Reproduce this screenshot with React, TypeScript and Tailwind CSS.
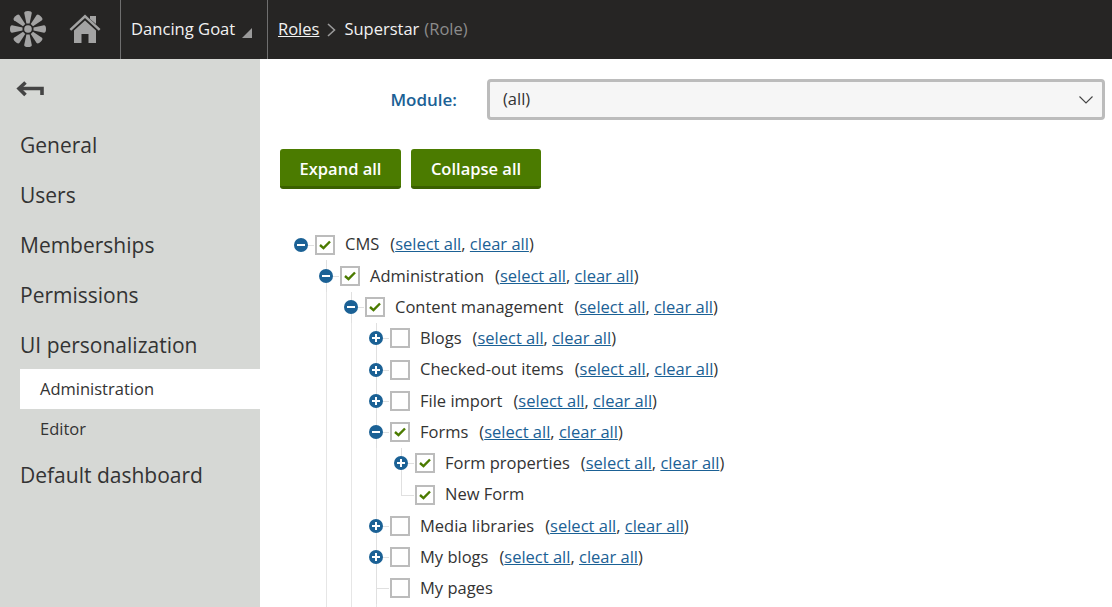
const MENU_TOP = ['General', 'Users', 'Memberships', 'Permissions', 'UI personalization'];

interface TreeRow {
  label: string;
  depth: number;
  checked?: boolean;
  toggle?: 'plus' | 'minus';
  last?: boolean;
  links?: boolean;
}

const ROWS: TreeRow[] = [
  { label: 'CMS', depth: 0, checked: true, toggle: 'minus', links: true },
  { label: 'Administration', depth: 1, checked: true, toggle: 'minus', links: true },
  { label: 'Content management', depth: 2, checked: true, toggle: 'minus', links: true },
  { label: 'Blogs', depth: 3, toggle: 'plus', links: true },
  { label: 'Checked-out items', depth: 3, toggle: 'plus', links: true },
  { label: 'File import', depth: 3, toggle: 'plus', links: true },
  { label: 'Forms', depth: 3, checked: true, toggle: 'minus', links: true },
  { label: 'Form properties', depth: 4, checked: true, toggle: 'plus', links: true },
  { label: 'New Form', depth: 4, checked: true, last: true },
  { label: 'Media libraries', depth: 3, toggle: 'plus', links: true },
  { label: 'My blogs', depth: 3, toggle: 'plus', links: true },
  { label: 'My pages', depth: 3 },
];

function Logo() {
  return (
    <svg width="38" height="38" viewBox="0 0 38 38" fill="#a3a3a3">
      <circle cx="19" cy="19" r="3.8" />
      {[0, 45, 90, 135, 180, 225, 270, 315].map(a => (
        <path
          key={a}
          transform={`rotate(${a} 19 19)`}
          d="M17.4 13.5 L15.2 3 Q15.2 1 19 1 Q22.8 1 22.8 3 L20.6 13.5 Z"
        />
      ))}
    </svg>
  );
}

function HomeIcon() {
  return (
    <svg width="32" height="30" viewBox="0 0 32 30" fill="#a3a3a3">
      <path d="M21 2h6v8l-6-5z" />
      <path d="M16 0.5 L31.5 15 L29.8 16.8 L16 4 L2.2 16.8 L0.5 15 Z" />
      <path d="M16 6.5 L27 16.5 V29 H19.5 V20 H12.5 V29 H5 V16.5 Z" />
    </svg>
  );
}

function BackArrow() {
  return (
    <svg width="28" height="16" viewBox="0 0 28 16" fill="none" stroke="#444" strokeWidth="3.6">
      <path d="M9.5 1.5 L3 7.5 L9.5 14" />
      <path d="M3 7.5 H26 V14" />
    </svg>
  );
}

function Toggle({ kind }: { kind: 'plus' | 'minus' }) {
  return (
    <span className="relative flex h-[14px] w-[14px] items-center justify-center rounded-full bg-[#1b6195]">
      <span className="h-[2px] w-[8px] bg-white" />
      {kind === 'plus' && <span className="absolute h-[8px] w-[2px] bg-white" />}
    </span>
  );
}

function CheckBox({ checked }: { checked?: boolean }) {
  return (
    <span className="ml-px flex h-[20px] w-[20px] shrink-0 items-center justify-center border-[2.5px] border-[#bcbcbc] bg-white">
      {checked && (
        <svg width="12" height="10" viewBox="0 0 12 10" fill="none" stroke="#4b7b00" strokeWidth="2.4">
          <path d="M1 5 L4.5 8.2 L11 1.5" />
        </svg>
      )}
    </span>
  );
}

function Guide({ show }: { show: boolean }) {
  return (
    <div className="w-[25px] shrink-0 pl-[12px]">
      {show && <div className="h-full w-px bg-[#e6e6e6]" />}
    </div>
  );
}

function Row({ row }: { row: TreeRow }) {
  return (
    <div className="flex h-[31.25px] items-stretch">
      {Array.from({ length: row.depth }).map((_, k) => (
        <Guide key={k} show={k > 0} />
      ))}
      <div className="relative flex w-[25px] shrink-0 items-center pl-[5px]">
        {row.depth > 0 && (
          <span className={`absolute left-[12px] top-0 w-px bg-[#e0e0e0] ${row.last ? 'h-1/2' : 'h-full'}`} />
        )}
        <span className="absolute left-[12px] right-0 top-1/2 h-px bg-[#e0e0e0]" />
        {row.toggle && <Toggle kind={row.toggle} />}
      </div>
      <div className="flex items-center">
        <CheckBox checked={row.checked} />
        <span className="ml-[10px] whitespace-nowrap">{row.label}</span>
        {row.links && (
          <span className="ml-[11px] whitespace-nowrap">
            (<a className="text-[#1b6195] underline">select all</a>, <a className="text-[#1b6195] underline">clear all</a>)
          </span>
        )}
      </div>
    </div>
  );
}

export default function App() {
  return (
    <div className="flex h-[607px] w-[1112px] flex-col overflow-hidden bg-white font-['Open_Sans',sans-serif] text-[#333]">
      <header className="flex h-[59px] shrink-0 items-stretch bg-[#262524] text-[16.5px] text-[#f2f2f2]">
        <div className="flex w-[120px] items-center gap-[22px] pl-[9px] pb-px">
          <Logo />
          <HomeIcon />
        </div>
        <div className="flex w-[148px] items-center border-x border-[#6f6f6f] pl-[10px]">
          <span className="text-[16.6px]">Dancing Goat</span>
          <svg className="ml-[7px] mt-[6px]" width="10" height="10" viewBox="0 0 10 10" fill="#9a9a9a">
            <path d="M10 0 V10 H0 Z" />
          </svg>
        </div>
        <div className="flex items-center pl-[10px]">
          <a className="underline">Roles</a>
          <svg className="ml-[8px] mr-[8px]" width="9" height="14" viewBox="0 0 9 14" fill="none" stroke="#9a9a9a" strokeWidth="1.6">
            <path d="M1 1 L7.5 7 L1 13" />
          </svg>
          <span>Superstar</span>
          <span className="ml-[5px] text-[#8c8c8c]">(Role)</span>
        </div>
      </header>
      <div className="flex min-h-0 flex-1">
        <aside className="w-[260px] shrink-0 bg-[#d6d8d5] pl-[20px]">
          <div className="-ml-[4px] pt-[22px]">
            <BackArrow />
          </div>
          <nav className="mt-[24px] text-[21px]">
            {MENU_TOP.map(item => (
              <div key={item} className="flex h-[50px] items-center">{item}</div>
            ))}
            <div className="-mt-[2px] text-[16.5px]">
              <div className="flex h-[40px] items-center bg-white pl-[20px]">Administration</div>
              <div className="flex h-[40px] items-center pl-[20px]">Editor</div>
            </div>
            <div className="mt-[2px] flex h-[50px] items-center">Default dashboard</div>
          </nav>
        </aside>
        <main className="min-w-0 flex-1 pl-[20px] pr-[8px] pt-[20px] text-[16.5px]">
          <div className="flex items-center">
            <label className="w-[177px] text-right text-[17px] font-semibold text-[#1b6195]">Module:</label>
            <div className="ml-[30px] -mr-px flex h-[41px] flex-1 items-center justify-between rounded-[4px] border-[3px] border-[#bcbcbc] bg-[#f6f6f6] pl-[13px] pr-[9px]">
              <span>(all)</span>
              <svg width="14" height="8" viewBox="0 0 14 8" fill="none" stroke="#444" strokeWidth="1.1">
                <path d="M0.5 0.5 L7 7 L13.5 0.5" />
              </svg>
            </div>
          </div>
          <div className="mt-[29px] flex gap-[10px]">
            <button className="h-[40px] w-[121px] rounded-[3px] border-b-[3px] border-[#3a6000] bg-[#4b7b00] pt-[3px] font-semibold text-white">Expand all</button>
            <button className="h-[40px] w-[130px] rounded-[3px] border-b-[3px] border-[#3a6000] bg-[#4b7b00] pt-[3px] font-semibold text-white">Collapse all</button>
          </div>
          <div className="mt-[40px] pl-[9px]">
            {ROWS.map(row => (
              <Row key={row.label} row={row} />
            ))}
            <div className="flex h-[10px] items-stretch">
              <Guide show={false} />
              <Guide show />
              <Guide show />
              <Guide show />
            </div>
          </div>
        </main>
      </div>
    </div>
  );
}
